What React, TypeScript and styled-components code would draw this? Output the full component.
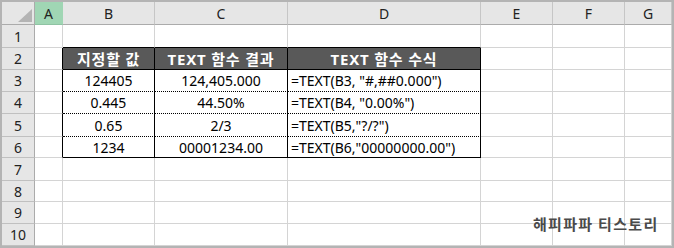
import React from "react";
import styled, { createGlobalStyle } from "styled-components";

const GlobalStyle = createGlobalStyle`
  html, body {
    margin: 0;
    padding: 0;
    background: #ffffff;
  }
  body {
    font-family: "Noto Sans", "Noto Sans CJK KR", sans-serif;
    color: #000;
  }
`;

const GRID = "1px solid #d4d4d4";
const SOLID = "1px solid #000";
const DOTTED = "1px dotted #000";

const Frame = styled.div`
  position: relative;
  width: 674px;
  height: 248px;
  box-sizing: border-box;
  border: 2px solid #b4b4b4;
  overflow: hidden;
`;

const Sheet = styled.div`
  display: grid;
  grid-template-columns: 33px 28px 92px 133px 193px 72px 72px 1fr;
  grid-template-rows: 23px 23px 22px 22px 22px 23px 21px 23px 21px 22px 22px;
  width: 100%;
  height: 100%;
`;

const Corner = styled.div`
  position: relative;
  background: #e6e6e6;
  border-right: 1px solid #ababab;
  border-bottom: 1px solid #ababab;
  box-sizing: border-box;

  svg {
    position: absolute;
    right: 2px;
    bottom: 2px;
  }
`;

const ColHead = styled.div<{ $selected?: boolean }>`
  display: flex;
  align-items: center;
  justify-content: center;
  box-sizing: border-box;
  background: ${(p) => (p.$selected ? "#a0d6b4" : "#e6e6e6")};
  border-right: 1px solid ${(p) => (p.$selected ? "#a0d6b4" : "#c6c6c6")};
  border-bottom: 1px solid ${(p) => (p.$selected ? "#8fc3a3" : "#ababab")};
  font-size: 14px;
  color: #222;
`;

const RowHead = styled.div`
  display: flex;
  align-items: center;
  justify-content: center;
  box-sizing: border-box;
  background: #e6e6e6;
  border-right: 1px solid #ababab;
  border-bottom: 1px solid #c0c0c0;
  font-size: 14px;
  color: #222;
`;

const Cell = styled.div<{
  $right: string;
  $bottom: string;
  $align?: "center" | "left";
  $head?: boolean;
}>`
  display: flex;
  align-items: center;
  justify-content: ${(p) => (p.$align === "left" ? "flex-start" : "center")};
  padding-left: ${(p) => (p.$align === "left" ? "3px" : "0")};
  box-sizing: border-box;
  border-right: ${(p) => p.$right};
  border-bottom: ${(p) => p.$bottom};
  background: ${(p) => (p.$head ? "#595959" : "#fff")};
  color: ${(p) => (p.$head ? "#fff" : "#000")};
  font-weight: ${(p) => (p.$head ? 700 : 400)};
  font-size: ${(p) => (p.$head ? "15px" : "14px")};
  letter-spacing: ${(p) => (p.$head ? "0.8px" : "0")};
  white-space: nowrap;
`;

const Watermark = styled.div`
  position: absolute;
  left: 531px;
  top: 211px;
  font-family: "Noto Sans CJK KR", sans-serif;
  font-weight: 700;
  font-size: 15px;
  letter-spacing: 1.3px;
  color: #4a4a4a;
`;

const COLUMNS = ["A", "B", "C", "D", "E", "F", "G"];

// table contents for B2:D6
const TABLE: string[][] = [
  ["지정할 값", "TEXT 함수 결과", "TEXT 함수 수식"],
  ["124405", "124,405.000", '=TEXT(B3, "#,##0.000")'],
  ["0.445", "44.50%", '=TEXT(B4, "0.00%")'],
  ["0.65", "2/3", '=TEXT(B5,"?/?")'],
  ["1234", "00001234.00", '=TEXT(B6,"00000000.00")'],
];

const inTable = (row: number, col: number) =>
  row >= 2 && row <= 6 && col >= 1 && col <= 3;

function rightBorder(row: number, col: number) {
  if (row >= 2 && row <= 6 && col >= 0 && col <= 3) return SOLID;
  return GRID;
}

function bottomBorder(row: number, col: number) {
  if (col < 1 || col > 3) return GRID;
  if (row === 1 || row === 2 || row === 6) return SOLID;
  if (row >= 3 && row <= 5) return DOTTED;
  return GRID;
}

const App: React.FC = () => {
  const rows = Array.from({ length: 10 }, (_, i) => i + 1);
  return (
    <>
      <GlobalStyle />
      <Frame>
        <Sheet>
          <Corner>
            <svg width="14" height="13" viewBox="0 0 14 13">
              <polygon points="14,0 14,13 0,13" fill="#b4b4b4" />
            </svg>
          </Corner>
          {COLUMNS.map((c, i) => (
            <ColHead key={c} $selected={i === 0}>
              {c}
            </ColHead>
          ))}
          {rows.map((r) => (
            <React.Fragment key={r}>
              <RowHead>{r}</RowHead>
              {COLUMNS.map((c, ci) => {
                const text = inTable(r, ci) ? TABLE[r - 2][ci - 1] : "";
                return (
                  <Cell
                    key={c}
                    $right={rightBorder(r, ci)}
                    $bottom={bottomBorder(r, ci)}
                    $align={ci === 3 && r > 2 ? "left" : "center"}
                    $head={r === 2 && inTable(r, ci)}
                  >
                    {text}
                  </Cell>
                );
              })}
            </React.Fragment>
          ))}
        </Sheet>
        <Watermark>해피파파 티스토리</Watermark>
      </Frame>
    </>
  );
};

export default App;
